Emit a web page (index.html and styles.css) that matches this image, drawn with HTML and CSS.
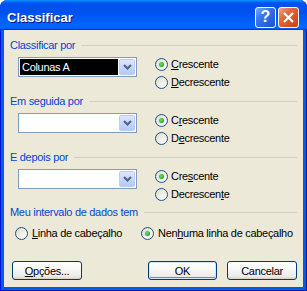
FILE: index.html
```html
<!DOCTYPE html>
<html lang="pt-BR">
<head>
    <meta charset="UTF-8">
    <title>Classificar</title>
    <link rel="stylesheet" href="styles.css">
</head>
<body>
    <div class="window">
        <div class="titlebar">
            <span class="title">Classificar</span>
            <span class="tb-btn help">?</span>
            <span class="tb-btn close">
                <svg viewBox="0 0 19 19"><path d="M5 5L14 14M14 5L5 14"/></svg>
            </span>
        </div>

        <div class="client">
            <div class="group">
                <div class="legend"><span>Classificar por</span></div>
                <div class="group-body">
                    <div class="combo">
                        <span class="combo-text"><span class="selected">Colunas A</span></span>
                        <span class="combo-btn"><svg viewBox="0 0 9 6"><path d="M1 1L4.5 4.5L8 1"/></svg></span>
                    </div>
                    <div class="radios">
                        <label class="radio checked"><span class="dot"></span><span><u>C</u>rescente</span></label>
                        <label class="radio"><span class="dot"></span><span><u>D</u>ecrescente</span></label>
                    </div>
                </div>
            </div>

            <div class="group">
                <div class="legend"><span>Em seguida por</span></div>
                <div class="group-body">
                    <div class="combo">
                        <span class="combo-text"></span>
                        <span class="combo-btn"><svg viewBox="0 0 9 6"><path d="M1 1L4.5 4.5L8 1"/></svg></span>
                    </div>
                    <div class="radios">
                        <label class="radio checked"><span class="dot"></span><span>C<u>r</u>escente</span></label>
                        <label class="radio"><span class="dot"></span><span>D<u>e</u>crescente</span></label>
                    </div>
                </div>
            </div>

            <div class="group third">
                <div class="legend"><span>E depois por</span></div>
                <div class="group-body">
                    <div class="combo">
                        <span class="combo-text"></span>
                        <span class="combo-btn"><svg viewBox="0 0 9 6"><path d="M1 1L4.5 4.5L8 1"/></svg></span>
                    </div>
                    <div class="radios">
                        <label class="radio checked"><span class="dot"></span><span>Cre<u>s</u>cente</span></label>
                        <label class="radio"><span class="dot"></span><span>Decrescen<u>t</u>e</span></label>
                    </div>
                </div>
            </div>

            <div class="group">
                <div class="legend"><span>Meu intervalo de dados tem</span></div>
                <div class="header-row">
                    <label class="radio first"><span class="dot"></span><span><u>L</u>inha de cabeçalho</span></label>
                    <label class="radio checked"><span class="dot"></span><span>Nen<u>h</u>uma linha de cabeçalho</span></label>
                </div>
            </div>

            <div class="buttons">
                <span class="btn options"><u>O</u>pções...</span>
                <span class="btn ok default">OK</span>
                <span class="btn cancel">Cancelar</span>
            </div>
        </div>
    </div>
</body>
</html>
```

FILE: styles.css
```css
* {
    margin: 0;
    padding: 0;
    box-sizing: border-box;
}

body {
    background: #fff;
    font-family: "Liberation Sans", Arial, sans-serif;
    font-size: 11px;
    letter-spacing: -0.3px;
    color: #000;
}

u {
    text-decoration: underline;
    text-underline-offset: 1px;
}

.window {
    width: 307px;
    height: 291px;
    display: flex;
    flex-direction: column;
    background: #0058EE;
    border-radius: 8px 8px 0 0;
    box-shadow: inset 1px 0 #0019CF, inset -1px 0 #001EA0, inset 0 -1px #001EA0;
}

.titlebar {
    height: 30px;
    flex: none;
    display: flex;
    align-items: center;
    gap: 2px;
    padding: 4px 8px 0 7px;
    border-radius: 7px 7px 0 0;
    background: linear-gradient(180deg, #0997FF 0%, #0053EE 10%, #0050EE 40%, #0066FF 85%, #0066FF 92%, #005BFF 95%, #003DD7 97%, #003DD7 100%);
}

.title {
    flex: 1;
    color: #fff;
    font-weight: bold;
    font-size: 13px;
    letter-spacing: 0;
    text-shadow: 1px 1px #0F1089;
}

.tb-btn {
    width: 21px;
    height: 21px;
    border: 1px solid #fff;
    border-radius: 3px;
    display: flex;
    align-items: center;
    justify-content: center;
    color: #fff;
}

.help {
    background: linear-gradient(135deg, #7BA7F7 0%, #3A78F0 35%, #2563DE 70%, #1F55CC 100%);
    font-size: 16px;
    font-weight: bold;
    letter-spacing: 0;
}

.close {
    background: linear-gradient(135deg, #EFA58C 0%, #E2683F 35%, #D8511F 70%, #C94218 100%);
}

.close svg {
    width: 19px;
    height: 19px;
    stroke: #fff;
    stroke-width: 2.2;
    fill: none;
}

.client {
    flex: 1;
    margin: 0 4px 4px;
    background: #ECE9D8;
    padding: 9px 6px 0;
}

.group {
    margin-bottom: 4px;
}

.group.third {
    margin-bottom: 3px;
}

.legend {
    height: 13px;
    line-height: 13px;
    display: flex;
    align-items: center;
    color: #0046D5;
}

.legend::after {
    content: "";
    flex: 1;
    height: 1px;
    margin-left: 6px;
    background: #D0D0BF;
}

.group-body {
    display: flex;
    margin-top: 3px;
    height: 36px;
}

.combo {
    width: 119px;
    height: 20px;
    margin: 2px 0 0 8px;
    border: 1px solid #7F9DB9;
    background: #fff;
    display: flex;
    padding: 1px;
}

.combo-text {
    flex: 1;
    display: flex;
}

.selected {
    flex: 1;
    background: #000;
    color: #fff;
    line-height: 16px;
    padding-left: 2px;
}

.combo-btn {
    width: 16px;
    margin-left: 1px;
    border: 1px solid #B9CCF9;
    border-radius: 2px;
    background: linear-gradient(180deg, #DCE6FD 0%, #C4D4FA 60%, #B5C9F7 100%);
    display: flex;
    align-items: center;
    justify-content: center;
}

.combo-btn svg {
    width: 9px;
    height: 6px;
    stroke: #4D6185;
    stroke-width: 2;
    fill: none;
}

.radios {
    margin-left: 18px;
}

.radio {
    height: 18px;
    display: flex;
    align-items: center;
    gap: 3px;
}

.dot {
    width: 13px;
    height: 13px;
    border: 1px solid #1C5180;
    border-radius: 50%;
    background: linear-gradient(135deg, #DCD7CB 0%, #F0EEE8 50%, #fff 100%);
    display: flex;
    align-items: center;
    justify-content: center;
}

.radio.checked .dot::after {
    content: "";
    width: 5px;
    height: 5px;
    border-radius: 50%;
    background: radial-gradient(circle at 40% 40%, #7BE07B 0%, #2CAB2C 60%, #21A121 100%);
}

.header-row {
    display: flex;
    margin-top: 5px;
}

.header-row .radio {
    gap: 4px;
}

.header-row .first {
    width: 126px;
    margin-left: 5px;
}

.buttons {
    display: flex;
    margin-top: 19px;
}

.btn {
    height: 19px;
    border: 1px solid #003C74;
    border-radius: 3px;
    background: linear-gradient(180deg, #fff 0%, #F8F8F5 40%, #ECEBE6 85%, #D6D0C5 100%);
    display: flex;
    align-items: center;
    justify-content: center;
}

.options {
    width: 70px;
    margin-left: 2px;
    margin-right: auto;
}

.ok {
    width: 69px;
    margin-right: 10px;
}

.default {
    box-shadow: inset 0 0 0 1px #CEE7FF, inset 0 -1px 0 1px #6982EE;
}

.cancel {
    width: 70px;
}
```
